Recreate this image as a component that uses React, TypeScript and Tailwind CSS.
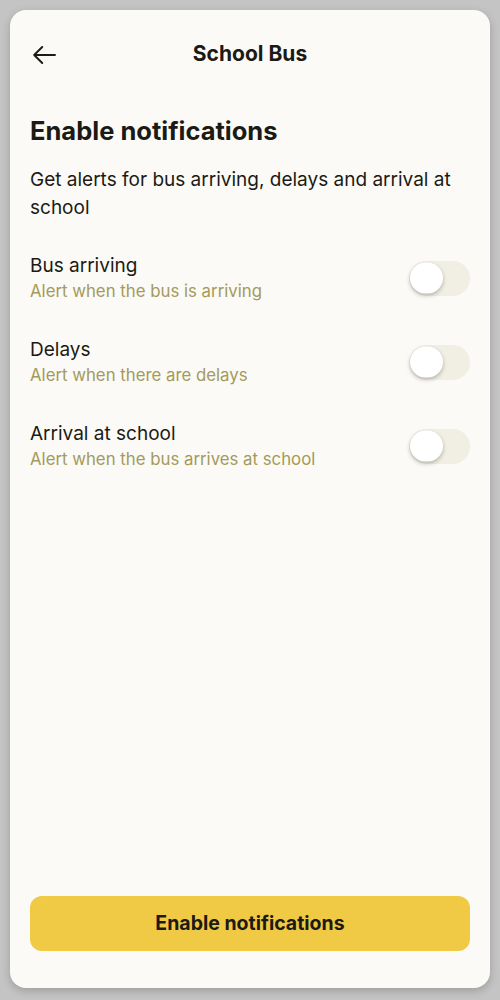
import React from "react";

// notification settings screen for the school bus app

const OPTIONS = [
  { id: "arriving", title: "Bus arriving", desc: "Alert when the bus is arriving" },
  { id: "delays", title: "Delays", desc: "Alert when there are delays" },
  { id: "school", title: "Arrival at school", desc: "Alert when the bus arrives at school" },
];

function Toggle({ on, onClick }: { on: boolean; onClick: () => void }) {
  return (
    <button
      type="button"
      onClick={onClick}
      className={
        "relative h-[35px] w-[61px] shrink-0 rounded-full " +
        (on ? "bg-[#f0c945]" : "bg-[#f1eee3]")
      }
    >
      <span
        className={
          "absolute top-1/2 h-[31px] w-[33px] -translate-y-1/2 rounded-full bg-white shadow-[0_2px_4px_rgba(0,0,0,0.25)] " +
          (on ? "left-[27px]" : "left-[1px]")
        }
      />
    </button>
  );
}

export default function App() {
  const [enabled, setEnabled] = React.useState<Record<string, boolean>>({});

  const toggle = (id: string) => {
    setEnabled((prev) => ({ ...prev, [id]: !prev[id] }));
  };

  return (
    <div className="min-h-[1000px] bg-[#c4c4c4] p-[10px] pb-[12px] font-['Inter',sans-serif] text-[#1b1a14]">
      <div className="flex h-[978px] flex-col rounded-2xl bg-[#fbfaf6] px-[20px] pb-[37px] shadow-[0_3px_8px_rgba(0,0,0,0.2)]">
        <div className="relative flex h-[88px] items-center justify-center">
          <button type="button" className="absolute left-[3px] top-[36px]">
            <svg width="23" height="18" viewBox="0 0 23 18" fill="none">
              <path
                d="M22 9H1.2M9.2 1L1.2 9L9.2 17"
                stroke="#1b1a14"
                strokeWidth="1.9"
                strokeLinecap="round"
                strokeLinejoin="round"
              />
            </svg>
          </button>
          <h1 className="text-[21px] font-bold">School Bus</h1>
        </div>

        <h2 className="mt-[17px] text-[25.5px] font-bold leading-[32px]">
          Enable notifications
        </h2>
        <p className="mt-[19px] text-[19px] leading-[28px]">
          Get alerts for bus arriving, delays and arrival at school
        </p>

        <div className="mt-[32px] flex flex-col gap-[36px]">
          {OPTIONS.map((opt) => (
            <div key={opt.id} className="flex items-center justify-between">
              <div>
                <p className="text-[19px] leading-[24px]">{opt.title}</p>
                <p className="mt-[2px] text-[16.8px] leading-[22px] text-[#a39a5b]">
                  {opt.desc}
                </p>
              </div>
              <Toggle on={!!enabled[opt.id]} onClick={() => toggle(opt.id)} />
            </div>
          ))}
        </div>

        <div className="flex-1" />

        <button
          type="button"
          className="h-[55px] w-full rounded-xl bg-[#f0c945] text-[19.5px] font-bold"
        >
          Enable notifications
        </button>
      </div>
    </div>
  );
}
